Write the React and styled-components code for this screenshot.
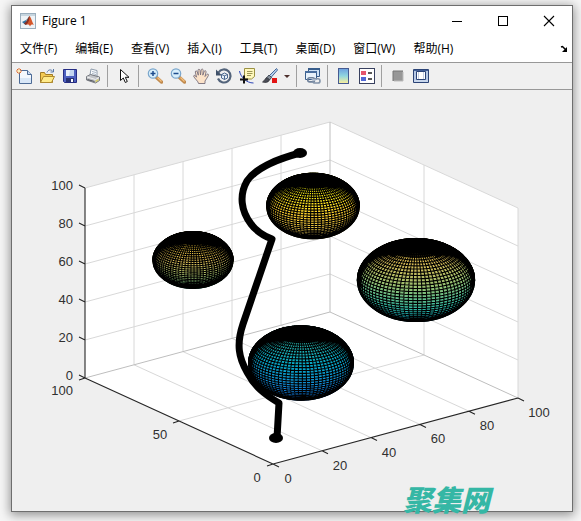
import React from "react";
import styled, { createGlobalStyle } from "styled-components";

const GlobalStyle = createGlobalStyle`
  * { box-sizing: border-box; }
  body { margin: 0; background: #f6f6f6; overflow: hidden; }
`;

const uiFont = `"Open Sans", "Noto Sans CJK SC", sans-serif`;

const Desktop = styled.div`
  padding: 5px 8px 9px 11px;
  font-family: ${uiFont};
`;

const Window = styled.main`
  position: relative;
  border: 1px solid #6e6e6e;
  background: #efefef;
`;

const Shadow = styled.div`
  box-shadow: 0 2px 10px 1px rgba(0, 0, 0, 0.42);
`;

const TitleBar = styled.header`
  display: flex;
  align-items: center;
  height: 30px;
  padding-left: 8px;
  background: #fff;
`;

const Title = styled.h1`
  flex: 1;
  margin: 0 0 0 6px;
  font-size: 12px;
  font-weight: 400;
  line-height: 16px;
  color: #000;
`;

const WindowButton = styled.button`
  display: grid;
  place-items: center;
  width: 46px;
  height: 30px;
  padding: 0;
  border: 0;
  background: none;
`;

const MenuBar = styled.nav`
  display: flex;
  align-items: center;
  gap: 18px;
  height: 26px;
  padding: 0 4px 0 8px;
  background: #fff;
`;

const MenuItem = styled.button`
  padding: 0;
  border: 0;
  background: none;
  font-family: ${uiFont};
  font-size: 12px;
  line-height: 18px;
  color: #000;
  white-space: nowrap;
`;

const DockButton = styled(MenuItem)`
  display: flex;
  margin-left: auto;
`;

const ToolBar = styled.div`
  display: flex;
  align-items: center;
  height: 28px;
  border-top: 1px solid #989898;
  border-bottom: 1px solid #989898;
  background: #f0f0f0;
`;

const Tool = styled.button`
  display: grid;
  place-items: center;
  width: ${(p) => (p.$narrow ? 12 : 23)}px;
  height: 24px;
  padding: 0;
  border: 0;
  background: none;
`;

const Separator = styled.span`
  width: 8px;
  height: 22px;
  background: linear-gradient(#a0a0a0, #a0a0a0) 3px 0 / 1px 100% no-repeat;
`;

const Plot = styled.svg`
  display: block;
  width: 100%;
  height: auto;
`;

const Watermark = styled.span`
  position: absolute;
  right: 82px;
  bottom: 1px;
  font-family: "Noto Sans CJK SC", sans-serif;
  font-size: 29px;
  font-style: italic;
  font-weight: 900;
  line-height: 24px;
  color: #35b7a5;
`;

/* ---------- icons ---------- */

const Icon = ({ size = 16, children }) => (
  <svg width={size} height={size} viewBox={`0 0 ${size} ${size}`} fill="none" aria-hidden="true">
    {children}
  </svg>
);

const MatlabIcon = () => (
  <Icon>
    <rect x=".5" y=".5" width="15" height="15" fill="#eef3f7" stroke="#9aaebd" />
    <path d="M1 1h14v2H1z" fill="#c6d5df" />
    <path d="M2 9l4-2 2 3-2.500 2z" fill="#35739f" />
    <path d="M6 7c2-1 2-3 3.500-4L8.500 10z" fill="#5d7f91" />
    <path d="M9.500 3c1.500 1 2.500 6 4.500 9-2-1-3-.5-4 1.500-.8-2-2-2.500-4-1.500C8 10 8.500 5 9.500 3z" fill="#d4562a" />
    <path d="M9.500 3c0 3-.2 6-3.500 9l-2-1.500C7 9 8 5 9.500 3z" fill="#8b2f22" />
  </Icon>
);

const NewIcon = () => (
  <Icon>
    <path d="M3.500 2.500h8l4 4v9h-12z" fill="#f4f8fd" stroke="#4d6b96" />
    <path d="M4 10h11v5H4z" fill="#d9e7f7" />
    <path d="M11.500 2.500v4h4" fill="#c9daf0" stroke="#4d6b96" />
    <path d="M3 0v6M0 3h6M1 1l4 4M5 1L1 5" stroke="#df692d" />
    <circle cx="3" cy="3" r="1.500" fill="#fff0ba" />
  </Icon>
);

const OpenIcon = () => (
  <Icon>
    <path d="M1.500 14.500v-10h4l1 2h7v8z" fill="#f4ca52" stroke="#a17c25" />
    <path d="M1.500 14.500l3-6h11l-3 6z" fill="#ffeb8a" stroke="#b08b2e" />
    <path d="M8 4.500C9 1.500 12 1 14 3.500M14.500 1v3h-3" stroke="#5777a8" />
  </Icon>
);

const SaveIcon = () => (
  <Icon>
    <path d="M1.500 1.500h13v13h-12l-1-1z" fill="#4d60bf" stroke="#262d83" />
    <path d="M4 2h8v6H4z" fill="#e9f0fb" />
    <path d="M8 2h4v6H7z" fill="#c4d5ef" />
    <path d="M4 10h8v4H4z" fill="#273173" />
    <path d="M9 11h2v3H9z" fill="#fff" />
  </Icon>
);

const PrintIcon = () => (
  <Icon>
    <path d="M5 7l1-6 6 1.500 0 6z" fill="#fbfdff" stroke="#8e9cac" />
    <path d="M7 3.500l4 1M7 5.500l4 1" stroke="#aab6c5" />
    <path d="M1.500 8.500l4-2 9 2.500v3.500l-4 2.500-9-3z" fill="#c2c4c8" stroke="#777a80" />
    <path d="M2 9l8.500 2.500L14 9.500" stroke="#f1f1f1" />
    <path d="M2.500 11.500l7 2" stroke="#50545b" />
    <path d="M10.500 12.500l3-1.500v1.500l-3 2z" fill="#d9cf63" />
  </Icon>
);

const CursorIcon = () => (
  <Icon>
    <path d="M4.500 1.500v11l2.800-2.500 2 4.500 2-1-2-4.200h3.700z" fill="#fff" stroke="#111" />
  </Icon>
);

const MagnifierIcon = ({ plus }) => (
  <Icon>
    <path d="M9.500 9.500l5 4.500" stroke="#c08a4e" strokeWidth="3.500" strokeLinecap="round" />
    <path d="M10.500 9.500l4 4" stroke="#f3bf7c" strokeWidth="1.200" />
    <circle cx="6" cy="5.500" r="4.700" fill="#d8effb" stroke="#7aa6cc" strokeWidth="1.200" />
    <path d={plus ? "M3.500 5.500h5M6 3v5" : "M3.500 5.500h5"} stroke="#1e4c8d" strokeWidth="1.500" />
  </Icon>
);

const HandIcon = () => (
  <Icon>
    <path
      d="M5.500 15.500c0-2-4-5-5-7.500.6-1.300 2-.7 3 1.200L2.300 4c0-1.500 1.600-1.500 2 0l1 3.200-.3-5c.2-1.400 1.800-1.200 2 .2L7.500 7l.7-5.200c.5-1.300 2-.8 2 .6L9.800 7.200l1.500-4c.7-1 2-.4 1.800.8L12 8.500l2-2.200c1-.6 2 .2 1.300 1.400-1 1.600-1.800 3.300-3.300 5.300v2.500z"
      fill="#fce3c9"
      stroke="#776e7b"
      strokeWidth=".9"
    />
  </Icon>
);

const RotateIcon = () => (
  <Icon>
    <path d="M2.500 4.500A6.500 6.500 0 1 1 2 10.500" stroke="#53647b" strokeWidth="2.200" />
    <path d="M0 1.500v6h6z" fill="#405169" />
    <path d="M5.500 6.500L8.500 5l3 1.500V10l-3 1.500-3-1.500zM5.500 6.500l3 1.300 3-1.300M8.500 7.800v3.700" fill="#e9f2fa" stroke="#3e5c86" strokeWidth=".9" />
  </Icon>
);

const DataCursorIcon = () => (
  <Icon>
    <path d="M5.500.5h10v8l-3 2.500h-7z" fill="#fff8bd" stroke="#9b9243" />
    <path d="M8 3.500h5.500M8 5.500h5.500M8 7.500h4" stroke="#9d9655" />
    <path d="M.5 3c.5 3 2 5.500 4.500 8s6 4 9.500 4" stroke="#2c45b8" />
    <path d="M5 7.500v8M1 11.500h8" stroke="#111" strokeWidth="2" />
  </Icon>
);

const BrushIcon = () => (
  <Icon>
    <path d="M14.500.5L7 8l1.500 2L15.500 2z" fill="#b6d2f0" stroke="#456898" />
    <path d="M7 7l2.500 2.500L7.500 12 5 9.500z" fill="#8a939e" stroke="#424c5a" />
    <path d="M5 9.500c-2 .5-2 3-4.500 4.500 3 1 6 .5 7-2z" fill="#4b4d56" stroke="#26282e" strokeWidth=".7" />
    <path d="M10 10h5v5h-5z" fill="#e21414" />
  </Icon>
);

const CaretIcon = () => (
  <Icon size={6}>
    <path d="M0 2h6L3 5z" fill="#4e302c" />
  </Icon>
);

const LinkIcon = () => (
  <Icon>
    <path d="M3.500.5h11v8h-11z" fill="#cee2f6" stroke="#385d8b" />
    <path d="M3 0h12v2H3z" fill="#385d8b" />
    <path d="M.5 3.500h11v8H.5z" fill="#e8f2fb" stroke="#385d8b" />
    <path d="M0 3h12v2H0z" fill="#486d9d" />
    <rect x="2.700" y="9.700" width="7" height="4.200" rx="2.100" stroke="#6f819a" strokeWidth="1.600" />
    <rect x="8" y="10.800" width="7" height="4.200" rx="2.100" stroke="#8293a9" strokeWidth="1.600" />
    <path d="M6.500 12h5" stroke="#dfe7f0" />
  </Icon>
);

const ColorbarIcon = () => (
  <Icon>
    <defs>
      <linearGradient id="bar" x1="0" y1="0" x2="0" y2="1">
        <stop stopColor="#6d9fe0" />
        <stop offset=".5" stopColor="#91d7df" />
        <stop offset="1" stopColor="#fff09a" />
      </linearGradient>
    </defs>
    <rect x="2.500" y=".5" width="10" height="15" fill="url(#bar)" stroke="#465a91" />
  </Icon>
);

const LegendIcon = () => (
  <Icon>
    <rect x=".5" y=".5" width="15" height="15" fill="#fff" stroke="#38405f" />
    <path d="M2 3h5v4H2z" fill="#e5566d" />
    <path d="M2 9h5v4H2z" fill="#5268d5" />
    <path d="M9 5h4M9 11h4" stroke="#222" strokeWidth="1.500" />
  </Icon>
);

const HideToolsIcon = () => (
  <Icon>
    <path d="M3 3h10v10H3z" fill="#979797" />
    <path d="M3 13V3h10" stroke="#777" />
    <path d="M4 13h9V4" stroke="#bbb" />
  </Icon>
);

const ShowToolsIcon = () => (
  <Icon>
    <path d="M.5 1.500h15v13H.5z" fill="#b7c9e5" stroke="#2c4477" />
    <path d="M1 2h14v1H1z" fill="#435f96" />
    <path d="M3.500 3.500h9v8h-9z" fill="#fff" stroke="#2c4477" />
    <path d="M5.500 4v7M10.500 4v7" stroke="#c3cee2" />
    <path d="M1 13h14" stroke="#dae5f4" />
  </Icon>
);

const tools = [
  ["新建图窗", <NewIcon />],
  ["打开文件", <OpenIcon />],
  ["保存图窗", <SaveIcon />],
  ["打印图窗", <PrintIcon />],
  null,
  ["编辑绘图", <CursorIcon />],
  null,
  ["放大", <MagnifierIcon plus />],
  ["缩小", <MagnifierIcon />],
  ["平移", <HandIcon />],
  ["三维旋转", <RotateIcon />],
  ["数据游标", <DataCursorIcon />],
  ["刷亮", <BrushIcon />],
  ["刷亮选项", <CaretIcon />, true],
  null,
  ["链接绘图", <LinkIcon />],
  null,
  ["插入颜色栏", <ColorbarIcon />],
  ["插入图例", <LegendIcon />],
  null,
  ["隐藏绘图工具", <HideToolsIcon />],
  ["显示绘图工具", <ShowToolsIcon />],
];

const menus = ["文件(F)", "编辑(E)", "查看(V)", "插入(I)", "工具(T)", "桌面(D)", "窗口(W)", "帮助(H)"];

/* ---------- 3-D chart ---------- */

const ORIGIN = [261, 374];
const AX = [2.45, -0.66];
const AY = [-1.88, -0.86];
const AZ = [0, -1.9];
const TO_VIEWER = [-1.88, -2.45, 1.76];

const project = (x, y, z, origin = ORIGIN) => [
  origin[0] + x * AX[0] + y * AY[0] + z * AZ[0],
  origin[1] + x * AX[1] + y * AY[1] + z * AZ[1],
];

const fmt = (points) => points.map((p) => p.map((v) => v.toFixed(2)).join(",")).join(" ");
const segment = (a, b) => `M${fmt([a])}L${fmt([b])}`;

const parula = [
  [53, 42, 135], [3, 99, 225], [20, 133, 212], [6, 167, 198], [56, 185, 158],
  [146, 191, 115], [217, 186, 86], [252, 206, 46], [249, 251, 14],
];

const colorAt = (t) => {
  const s = Math.min(0.999, Math.max(0, t)) * (parula.length - 1);
  const i = Math.floor(s);
  const c = parula[i].map((v, k) => Math.round(v + (parula[i + 1][k] - v) * (s - i)));
  return `rgb(${c.join(",")})`;
};

const LATS = 40;
const LONS = 80;

const spherePoint = (a, b) => {
  const lat = -Math.PI / 2 + (Math.PI * a) / LATS;
  const lon = (2 * Math.PI * b) / LONS;
  return [Math.cos(lat) * Math.cos(lon), Math.cos(lat) * Math.sin(lon), Math.sin(lat)];
};

/* Cells too small to show a fill between their edges go into the dense path. */
const DENSE_RATIO = 0.36;

function buildSphere({ center, r, low, high }) {
  const bands = [];
  let mesh = "";
  let dense = "";
  const fullArea = 3.088 * 2.19 * r * r * (Math.PI / LATS) ** 2;
  for (let i = 0; i < LATS; i++) {
    let d = "";
    for (let j = 0; j < LONS; j++) {
      const mid = spherePoint(i + 0.5, j + 0.5);
      if (mid.reduce((s, v, k) => s + v * TO_VIEWER[k], 0) <= 0) continue;
      const [a, b, c, e] = [[i, j], [i, j + 1], [i + 1, j + 1], [i + 1, j]].map(([m, n]) => {
        const p = spherePoint(m, n);
        return project(p[0] * r, p[1] * r, p[2] * r, center);
      });
      d += `M${fmt([a, b, c, e])}z`;
      mesh += `M${fmt([b, a, e])}`;
      const area = Math.abs((c[0] - a[0]) * (e[1] - b[1]) - (c[1] - a[1]) * (e[0] - b[0])) / 2;
      if (mid[2] > 0 && area < fullArea * DENSE_RATIO) dense += `M${fmt([a, b, c, e])}z`;
    }
    const z = (Math.sin(-Math.PI / 2 + (Math.PI * (i + 0.5)) / LATS) + 1) / 2;
    if (d) bands.push({ d, fill: colorAt(low + (high - low) * z) });
  }
  return { bands, mesh, dense, cx: center[0], cy: center[1], rx: r * 3.088, ry: r * 2.19 };
}

const spheres = [
  { center: [301, 116], r: 15, low: 0.68, high: 1 },
  { center: [181, 170], r: 13, low: 0.48, high: 0.86 },
  { center: [404, 190], r: 19, low: 0.3, high: 0.8 },
  { center: [289, 273], r: 17, low: 0.1, high: 0.48 },
].map(buildSphere);

const steps = [20, 40, 60, 80];
const gridPath = [
  ...steps.map((v) => segment(project(v, 0, 0), project(v, 100, 0))),
  ...steps.map((v) => segment(project(v, 100, 0), project(v, 100, 100))),
  ...[...steps, 100].map((v) => segment(project(0, 100, v), project(100, 100, v))),
  ...[...steps, 100].map((v) => segment(project(100, 0, v), project(100, 100, v))),
  segment(project(0, 50, 0), project(100, 50, 0)),
  segment(project(100, 50, 0), project(100, 50, 100)),
  segment(project(100, 0, 0), project(100, 0, 100)),
].join("");

const backPath = [
  segment(project(0, 100, 0), project(100, 100, 0)),
  segment(project(100, 100, 0), project(100, 0, 0)),
  segment(project(100, 100, 0), project(100, 100, 100)),
].join("");

const all = [0, ...steps, 100];
const tick = (p, dx, dy) => segment(p, [p[0] + dx, p[1] + dy]);
const axisPath = [
  segment(project(0, 100, 0), project(0, 100, 100)),
  segment(project(0, 0, 0), project(0, 100, 0)),
  segment(project(0, 0, 0), project(100, 0, 0)),
  ...all.map((v) => tick(project(0, 100, v), -6, -3)),
  ...all.map((v) => tick(project(v, 0, 0), 6, 3)),
  ...[0, 50, 100].map((v) => tick(project(0, v, 0), -6, 2)),
].join("");

const room = [
  project(0, 0, 0), project(0, 100, 0), project(0, 100, 100),
  project(100, 100, 100), project(100, 0, 100), project(100, 0, 0),
];

const AxisLabel = styled.text`
  font-family: "Liberation Sans", Arial, sans-serif;
  font-size: 13px;
  fill: #303030;
  text-anchor: ${(p) => p.$anchor || "middle"};
`;

const xLabels = all.map((v) => {
  const [x, y] = project(v, 0, 0);
  const inset = 15 + 3 * (String(v).length - 1);
  return { text: v, x: x + inset, y: y + 19 };
});

function Chart() {
  return (
    <Plot viewBox="0 0 560 421" role="img" aria-label="三维路径与球体">
      <polygon points={fmt(room)} fill="#fff" />
      <path d={gridPath} stroke="#d8d8d8" />
      <path d={backPath} stroke="#bebebe" />
      <path d={axisPath} stroke="#262626" strokeWidth="1.100" fill="none" />
      {all.map((v) => (
        <AxisLabel key={v} $anchor="end" x="61" y={290 - v * 1.9}>{v}</AxisLabel>
      ))}
      <AxisLabel $anchor="end" x="61" y="305">100</AxisLabel>
      <AxisLabel x="148" y="349">50</AxisLabel>
      <AxisLabel x="245" y="392">0</AxisLabel>
      {xLabels.map((l) => (
        <AxisLabel key={l.text} x={l.x} y={l.y}>{l.text}</AxisLabel>
      ))}
      {spheres.map((s, i) => (
        <g key={i}>
          <ellipse cx={s.cx} cy={s.cy} rx={s.rx} ry={s.ry} />
          {s.bands.map((b, k) => (
            <path key={k} d={b.d} fill={b.fill} stroke={b.fill} strokeWidth=".3" />
          ))}
          <path d={s.mesh} fill="none" stroke="#000" strokeWidth="1.100" />
          <path d={s.dense} fill="#000" fillOpacity=".8" stroke="#000" strokeWidth=".6" />
          <ellipse cx={s.cx} cy={s.cy} rx={s.rx - 0.5} ry={s.ry - 0.5} fill="none" stroke="#000" strokeWidth="2" />
        </g>
      ))}
      <path
        d="M288 63C262 70 244 78 235 91C227 105 229 121 239 134C245 142 252 146 260 149L231 234C224 255 227 268 235 282C243 297 252 304 267 313L265 348"
        fill="none"
        stroke="#000"
        strokeWidth="7"
        strokeLinejoin="round"
      />
      <ellipse cx="288" cy="63" rx="7" ry="5" />
      <ellipse cx="264" cy="348" rx="7" ry="5" />
    </Plot>
  );
}

export default function App() {
  return (
    <Desktop>
      <GlobalStyle />
      <Shadow>
        <Window>
          <TitleBar>
            <MatlabIcon />
            <Title>Figure 1</Title>
            <WindowButton aria-label="最小化">
              <Icon size={12}><path d="M1 6.500h10" stroke="#000" /></Icon>
            </WindowButton>
            <WindowButton aria-label="最大化">
              <Icon size={12}><rect x="1.500" y="1.500" width="9" height="9" stroke="#000" /></Icon>
            </WindowButton>
            <WindowButton aria-label="关闭">
              <Icon size={12}><path d="M1 1l10 10M11 1L1 11" stroke="#000" strokeWidth="1.100" /></Icon>
            </WindowButton>
          </TitleBar>
          <MenuBar>
            {menus.map((m) => <MenuItem key={m}>{m}</MenuItem>)}
            <DockButton aria-label="停靠">
              <Icon size={8}><path d="M1 2l1.500-.5L6 5" stroke="#000" strokeWidth="1.500" /><path d="M7 2v5H2z" fill="#000" /></Icon>
            </DockButton>
          </MenuBar>
          <ToolBar role="toolbar">
            {tools.map((t, i) =>
              t ? <Tool key={i} aria-label={t[0]} $narrow={t[2]}>{t[1]}</Tool> : <Separator key={i} />
            )}
          </ToolBar>
          <Chart />
          <Watermark>聚集网</Watermark>
        </Window>
      </Shadow>
    </Desktop>
  );
}
